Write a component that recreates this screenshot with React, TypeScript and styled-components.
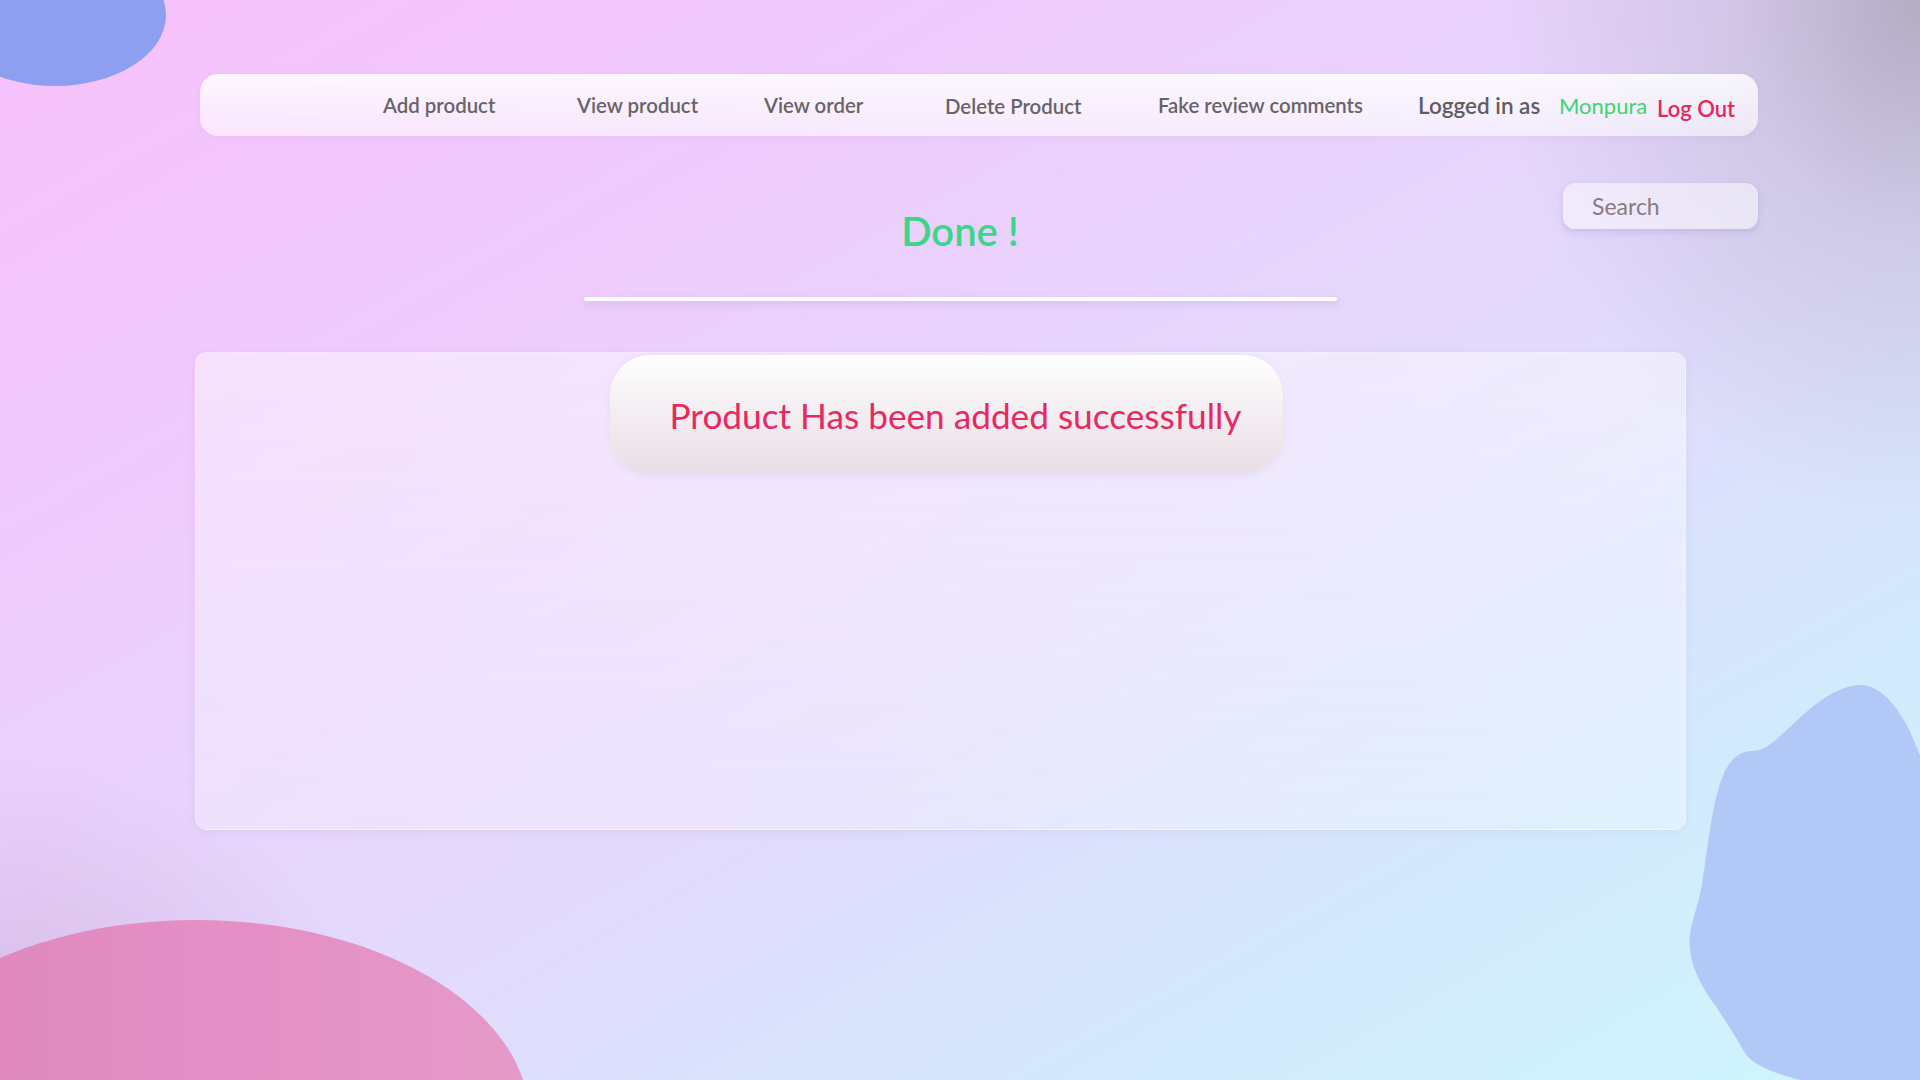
import React from "react";
import styled, { createGlobalStyle } from "styled-components";

const GlobalStyle = createGlobalStyle`
  html, body { margin: 0; padding: 0; }
  body {
    font-family: Lato, "Liberation Sans", sans-serif;
    overflow: hidden;
  }
  * { box-sizing: border-box; }
`;

const Page = styled.div`
  position: relative;
  width: 1920px;
  height: 1080px;
  overflow: hidden;
  background:
    radial-gradient(ellipse 420px 520px at 100% 0%, rgba(170, 165, 185, 0.85) 0%, rgba(180, 175, 200, 0.4) 45%, rgba(200, 200, 230, 0) 100%),
    radial-gradient(ellipse 380px 320px at 0% 100%, rgba(205, 170, 215, 0.7), rgba(205, 170, 215, 0) 100%),
    linear-gradient(to bottom right, #f8c0fd 0%, #f0c9fc 22%, #e6d6fc 48%, #e0dcfc 60%, #d4e8fc 77%, #cdf7fd 100%);
`;

const TopBlob = styled.div`
  position: absolute;
  left: -56px;
  top: -56px;
  width: 222px;
  height: 142px;
  border-radius: 50%;
  background: #8e9ef0;
`;

const BottomBlob = styled.div`
  position: absolute;
  left: -138px;
  top: 920px;
  width: 668px;
  height: 400px;
  border-radius: 50%;
  background: linear-gradient(90deg, #dc86ba 0%, #e48fc6 55%, #e59ac7 100%);
`;

const SideBlob = styled.svg`
  position: absolute;
  right: 0;
  bottom: 0;
  width: 260px;
  height: 420px;
`;

const Content = styled.div`
  position: relative;
  z-index: 1;
  display: flex;
  flex-direction: column;
`;

const NavBar = styled.nav`
  margin: 74px 0 0 200px;
  width: 1558px;
  height: 62px;
  border-radius: 18px;
  padding-left: 183px;
  display: grid;
  grid-template-columns: 194px 187px 181px 213px 260px 141px 98px 1fr;
  align-items: center;
  background: linear-gradient(180deg, rgba(255, 255, 255, 0.85), rgba(255, 255, 255, 0.55));
  box-shadow: 0 2px 6px rgba(170, 130, 210, 0.12);
`;

const NavLink = styled.a<{ $drop?: number }>`
  font-size: 20.4px;
  font-weight: 600;
  color: #676467;
  white-space: nowrap;
  cursor: pointer;
  padding-top: ${(p) => p.$drop ?? 0}px;
`;

const UserLabel = styled.span`
  font-size: 22.5px;
  font-weight: 600;
  color: #5f5d60;
  white-space: nowrap;
`;

const UserName = styled.span`
  font-size: 22px;
  font-weight: 400;
  color: #3fd473;
  white-space: nowrap;
`;

const LogoutLink = styled.a`
  font-size: 22px;
  font-weight: 600;
  color: #e8265e;
  white-space: nowrap;
  padding-top: 6px;
  cursor: pointer;
`;

const HeaderRow = styled.div`
  margin-top: 47px;
  display: grid;
  grid-template-columns: 1fr auto 1fr;
  align-items: start;
`;

const Title = styled.h1`
  grid-column: 2;
  margin: 24px 0 0;
  font-size: 40px;
  font-weight: 600;
  line-height: 48px;
  color: #3bd68a;
`;

const SearchInput = styled.input`
  grid-column: 3;
  justify-self: end;
  margin-right: 162px;
  width: 195px;
  height: 46px;
  border: none;
  outline: none;
  border-radius: 12px;
  padding: 0 0 0 29px;
  font-family: Lato, "Liberation Sans", sans-serif;
  font-size: 23px;
  color: #8a7a80;
  background: rgba(255, 255, 255, 0.5);
  box-shadow: 0 3px 7px rgba(120, 110, 170, 0.22);
  &::placeholder { color: #8a7a80; }
`;

const Divider = styled.div`
  margin: 42px auto 0;
  width: 753px;
  height: 4px;
  border-radius: 2px;
  background: #ffffff;
  box-shadow: 0 3px 6px rgba(150, 110, 190, 0.25);
`;

const Card = styled.section`
  margin: 51px 0 0 195px;
  width: 1491px;
  height: 478px;
  padding-top: 2px;
  border-radius: 12px;
  border: 1px solid rgba(255, 255, 255, 0.35);
  background: linear-gradient(180deg, rgba(255, 255, 255, 0.45), rgba(255, 255, 255, 0.3));
  box-shadow: 0 2px 8px rgba(160, 120, 200, 0.12);
`;

const MessagePill = styled.div`
  margin-left: 414px;
  width: 673px;
  height: 119px;
  border-radius: 40px;
  padding-left: 18px;
  display: flex;
  align-items: center;
  justify-content: center;
  background: linear-gradient(180deg, #ffffff 0%, #f5f0f3 40%, #e8dfe6 100%);
  box-shadow: 0 2px 6px rgba(170, 140, 180, 0.12);
  font-size: 35.2px;
  color: #e8295f;
  white-space: nowrap;
`;

export default function App() {
  return (
    <Page>
      <GlobalStyle />
      <TopBlob />
      <BottomBlob />
      <SideBlob viewBox="1660 660 260 420" preserveAspectRatio="none">
        <path
          d="M1862,685 C1835,685 1810,708 1790,727 C1775,741 1765,751 1752,751 C1738,751 1728,762 1722,778 C1712,805 1708,845 1702,885 C1698,905 1692,920 1690,935 C1687,960 1700,985 1715,1005 C1728,1025 1738,1040 1743,1050 C1752,1068 1785,1076 1808,1082 L1925,1082 L1925,770 C1912,730 1892,688 1862,685 Z"
          fill="#b2c8f6"
        />
      </SideBlob>
      <Content>
        <NavBar>
          <NavLink>Add product</NavLink>
          <NavLink>View product</NavLink>
          <NavLink>View order</NavLink>
          <NavLink $drop={2}>Delete Product</NavLink>
          <NavLink>Fake review comments</NavLink>
          <UserLabel>Logged in as</UserLabel>
          <UserName>Monpura</UserName>
          <LogoutLink>Log Out</LogoutLink>
        </NavBar>
        <HeaderRow>
          <Title>Done !</Title>
          <SearchInput placeholder="Search" />
        </HeaderRow>
        <Divider />
        <Card>
          <MessagePill>Product Has been added successfully</MessagePill>
        </Card>
      </Content>
    </Page>
  );
}
